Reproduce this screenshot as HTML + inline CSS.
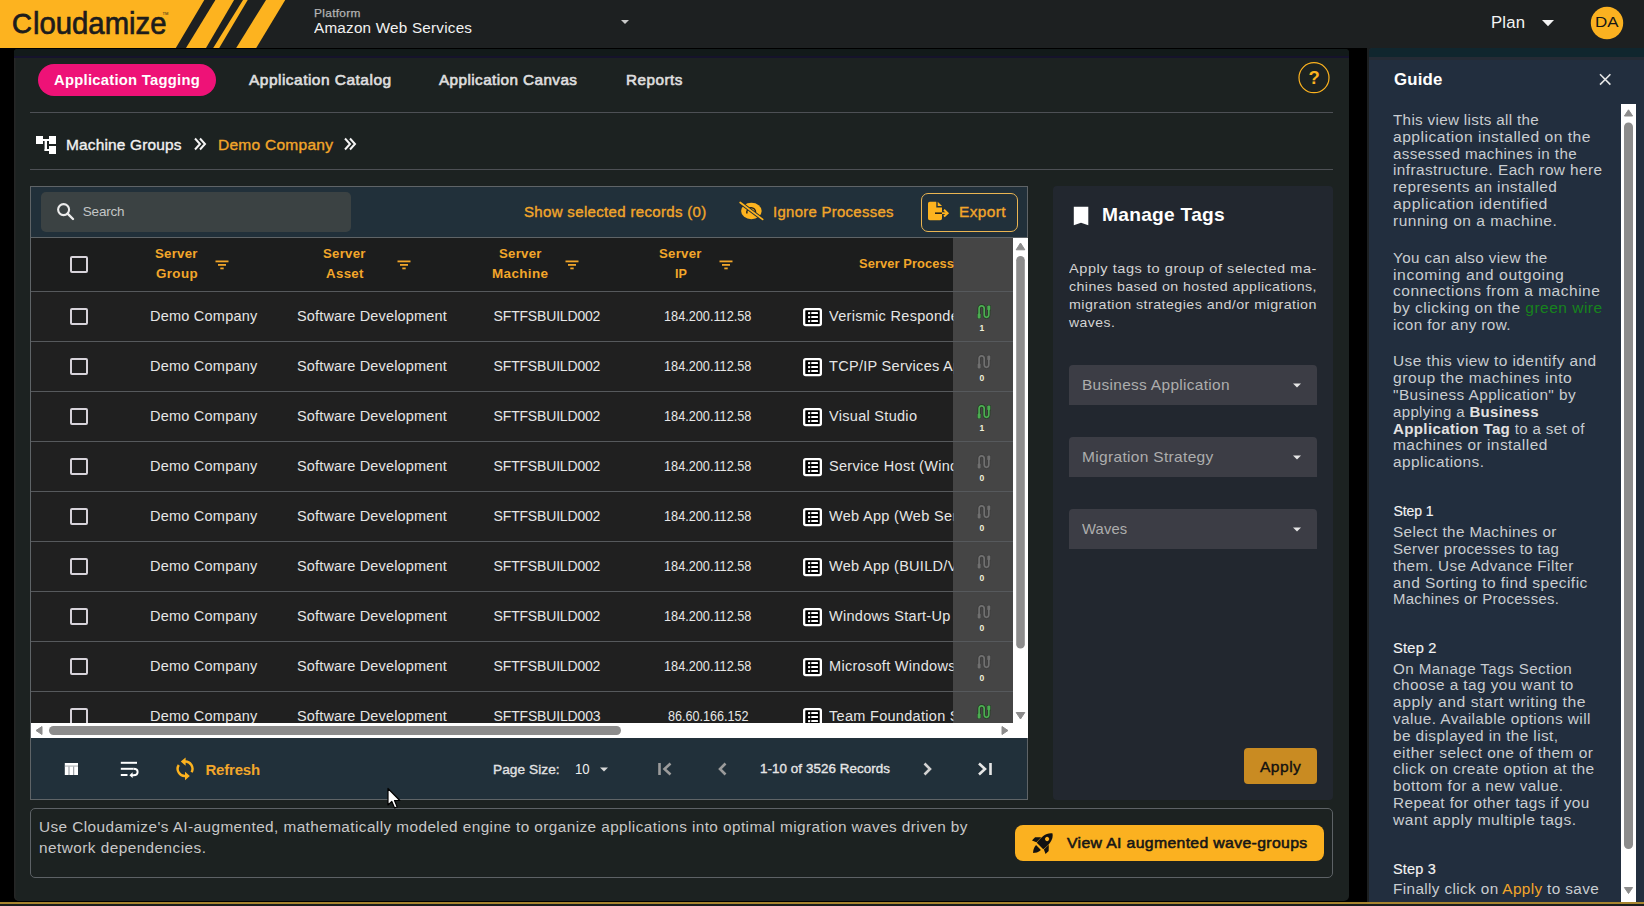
<!DOCTYPE html><html><head><meta charset="utf-8"><title>Cloudamize - Application Tagging</title><style>html,body{margin:0;padding:0;}body{width:1644px;height:906px;overflow:hidden;position:relative;font-family:"Liberation Sans", sans-serif;-webkit-font-smoothing:antialiased;}b{font-weight:700}</style></head><body>
<div style="position:absolute;left:0px;top:0px;width:1644px;height:906px;background:#1b1f1f"></div>
<div style="position:absolute;left:0px;top:48px;width:1367px;height:854px;background:#000"></div>
<div style="position:absolute;left:0px;top:0px;width:1644px;height:48px;background:#1d2021"></div>
<svg style="position:absolute;left:0px;top:0px;" width="300" height="48" viewBox="0 0 300 48"><polygon fill="#fdb31f" points="0,0 204.3,0 175.8,48 0,48"/><polygon fill="#fdb31f" points="215.4,0 234.1,0 206,48 186,48"/><polygon fill="#fdb31f" points="243,0 247.7,0 219.2,48 213.2,48"/><polygon fill="#fdb31f" points="266,0 285.2,0 256.2,48 236.2,48"/></svg>
<svg style="position:absolute;left:620px;top:19px;" width="10" height="6" viewBox="0 0 10 6"><polygon fill="#c9c9c9" points="1,1 9,1 5,5"/></svg>
<svg style="position:absolute;left:1541px;top:19px;" width="14" height="8" viewBox="0 0 14 8"><polygon fill="#f4f4f4" points="1,1 13,1 7,7.3"/></svg>
<svg style="position:absolute;left:1590px;top:6px;" width="34" height="34" viewBox="0 0 34 34"><circle cx="17" cy="17" r="16.2" fill="#fbb120"/></svg>
<div style="position:absolute;left:14px;top:49px;width:1335px;height:852px;background:#1c2221;border-radius:4px 4px 5px 5px;box-shadow:inset 1.5px 0 0 #252626"></div>
<div style="position:absolute;left:14px;top:49px;width:1335px;height:7px;background:#121a1a;border-radius:4px 4px 0 0"></div>
<div style="position:absolute;left:14px;top:56px;width:1335px;height:2px;background:#15132c"></div>
<div style="position:absolute;left:38px;top:64px;width:178px;height:32px;background:#ee1277;border-radius:16px"></div>
<svg style="position:absolute;left:1297px;top:61px;" width="34" height="34" viewBox="0 0 34 34"><circle cx="17" cy="16.7" r="15" fill="none" stroke="#fdb31f" stroke-width="1.2"/></svg>
<div style="position:absolute;left:30px;top:112px;width:1303px;height:1px;background:#4d5055"></div>
<svg style="position:absolute;left:30px;top:130px;" width="30" height="30" viewBox="0 0 30 30"><g fill="#fff"><rect x="6" y="6" width="7" height="8"/><rect x="19" y="6" width="7" height="8"/><rect x="19" y="16" width="7" height="8"/><rect x="13" y="9" width="6" height="2"/><rect x="14.6" y="9" width="2.4" height="12"/><rect x="14.6" y="19" width="4.4" height="2"/></g></svg>
<svg style="position:absolute;left:190px;top:136px;" width="20" height="16" viewBox="0 0 20 16"><path d="M5,2.5 L10,8 L5,13.5 M10,2.5 L15,8 L10,13.5" fill="none" stroke="#f4f4f4" stroke-width="2"/></svg>
<svg style="position:absolute;left:340px;top:136px;" width="20" height="16" viewBox="0 0 20 16"><path d="M5,2.5 L10,8 L5,13.5 M10,2.5 L15,8 L10,13.5" fill="none" stroke="#f4f4f4" stroke-width="2"/></svg>
<div style="position:absolute;left:30px;top:169px;width:1303px;height:1px;background:#4d5055"></div>
<div style="position:absolute;left:30px;top:186px;width:998px;height:614px;background:#202020;box-sizing:border-box;border:1px solid #5f6467"></div>
<div style="position:absolute;left:31px;top:187px;width:996px;height:50px;background:#21303a"></div>
<div style="position:absolute;left:41px;top:192px;width:310px;height:40px;background:#3b4243;border-radius:5px"></div>
<svg style="position:absolute;left:52px;top:199px;" width="24" height="24" viewBox="0 0 24 24"><circle cx="11.6" cy="10.6" r="5.5" fill="none" stroke="#ececec" stroke-width="2.1"/><line x1="15.6" y1="14.6" x2="21" y2="20" stroke="#ececec" stroke-width="2.4" stroke-linecap="round"/></svg>
<svg style="position:absolute;left:735px;top:196px;" width="30" height="30" viewBox="0 0 30 30"><ellipse cx="16.4" cy="15" rx="10.3" ry="8.2" fill="#fdb31f"/><path d="M12.1,17.6 A4.4,4.4 0 1 1 20.6,16.6" fill="none" stroke="#2a2418" stroke-width="1.4"/><line x1="5.2" y1="6.5" x2="27.6" y2="23.4" stroke="#21303a" stroke-width="3.6"/><line x1="5.2" y1="6.5" x2="27.6" y2="23.4" stroke="#fdb31f" stroke-width="1.8" stroke-linecap="round"/></svg>
<div style="position:absolute;left:921px;top:192.5px;width:97px;height:39px;box-sizing:border-box;border:1.5px solid #eab552;border-radius:7px"></div>
<svg style="position:absolute;left:925px;top:199px;" width="26" height="24" viewBox="0 0 26 24"><path d="M3,4.5 Q3,2.7 4.8,2.7 L11.3,2.7 L11.3,8.5 L17,8.5 L17,19.5 Q17,21.3 15.2,21.3 L4.8,21.3 Q3,21.3 3,19.5 Z" fill="#fdb31f"/><path d="M12.7,2.7 L17,7 L12.7,7 Z" fill="#fdb31f"/><line x1="10" y1="14.2" x2="17" y2="14.2" stroke="#2a2418" stroke-width="1.6"/><line x1="17" y1="14.2" x2="22" y2="14.2" stroke="#fdb31f" stroke-width="1.8"/><path d="M19,10.8 L22.6,14.2 L19,17.6" fill="none" stroke="#fdb31f" stroke-width="2"/></svg>
<div style="position:absolute;left:31px;top:237px;width:996px;height:1px;background:#5f6467"></div>
<div style="position:absolute;left:31px;top:238px;width:922px;height:53px;background:#1c1d1d"></div>
<div style="position:absolute;left:953px;top:238px;width:60px;height:485px;background:#454545"></div>
<div style="position:absolute;left:70px;top:256px;width:18px;height:17px;box-sizing:border-box;border:2px solid #d7d3da;border-radius:2px"></div>
<svg style="position:absolute;left:215px;top:259.5px;" width="14" height="10" viewBox="0 0 14 10"><g fill="#f2a62a"><rect x="0.5" y="0.5" width="13" height="1.8"/><rect x="3" y="4" width="8" height="1.8"/><rect x="5.3" y="7.5" width="3.4" height="1.8"/></g></svg>
<svg style="position:absolute;left:397px;top:259.5px;" width="14" height="10" viewBox="0 0 14 10"><g fill="#f2a62a"><rect x="0.5" y="0.5" width="13" height="1.8"/><rect x="3" y="4" width="8" height="1.8"/><rect x="5.3" y="7.5" width="3.4" height="1.8"/></g></svg>
<svg style="position:absolute;left:565px;top:259.5px;" width="14" height="10" viewBox="0 0 14 10"><g fill="#f2a62a"><rect x="0.5" y="0.5" width="13" height="1.8"/><rect x="3" y="4" width="8" height="1.8"/><rect x="5.3" y="7.5" width="3.4" height="1.8"/></g></svg>
<svg style="position:absolute;left:719px;top:259.5px;" width="14" height="10" viewBox="0 0 14 10"><g fill="#f2a62a"><rect x="0.5" y="0.5" width="13" height="1.8"/><rect x="3" y="4" width="8" height="1.8"/><rect x="5.3" y="7.5" width="3.4" height="1.8"/></g></svg>
<div style="position:absolute;left:31px;top:290.5px;width:982px;height:1px;background:#56595c"></div>
<div style="position:absolute;left:70px;top:308px;width:18px;height:17px;box-sizing:border-box;border:2px solid #d7d3da;border-radius:2px"></div>
<svg style="position:absolute;left:803px;top:307.5px;" width="20" height="20" viewBox="0 0 20 20"><rect x="1.15" y="1.15" width="16.7" height="16" rx="1.6" fill="#000" stroke="#fff" stroke-width="2.3"/><g fill="#fff"><rect x="5" y="4" width="2.2" height="2.2" rx="0.6"/><rect x="5" y="8" width="2.2" height="2.2" rx="0.6"/><rect x="5" y="12" width="2.2" height="2.2" rx="0.6"/><rect x="8.2" y="4.1" width="6.8" height="2" rx="0.6"/><rect x="8.2" y="8.1" width="6.8" height="2" rx="0.6"/><rect x="8.2" y="12.1" width="6.8" height="2" rx="0.6"/></g></svg>
<svg style="position:absolute;left:975.5px;top:303.5px;" width="16" height="16" viewBox="0 0 16 16"><path d="M3.1,12.5 L3.1,4.6 Q3.1,1.9 5.6,1.9 Q8.2,1.9 8.2,4.6 L8.2,10.6 Q8.2,13.3 10.5,13.3 Q12.8,13.3 12.8,10.6 L12.8,3" fill="none" stroke="#233a22" stroke-width="3.1"/><rect x="1.1" y="9" width="4" height="5.8" rx="1.3" fill="#233a22"/><rect x="10.8" y="1" width="4" height="5.8" rx="1.3" fill="#233a22"/><path d="M3.1,12.5 L3.1,4.6 Q3.1,1.9 5.6,1.9 Q8.2,1.9 8.2,4.6 L8.2,10.6 Q8.2,13.3 10.5,13.3 Q12.8,13.3 12.8,10.6 L12.8,3" fill="none" stroke="#4cad52" stroke-width="1.7"/><rect x="1.6" y="9.6" width="3" height="4.8" rx="1" fill="#4cad52"/><rect x="11.3" y="1.5" width="3" height="4.8" rx="1" fill="#4cad52"/></svg>
<div style="position:absolute;left:31px;top:341px;width:982px;height:1px;background:#56595c"></div>
<div style="position:absolute;left:70px;top:358px;width:18px;height:17px;box-sizing:border-box;border:2px solid #d7d3da;border-radius:2px"></div>
<svg style="position:absolute;left:803px;top:357.5px;" width="20" height="20" viewBox="0 0 20 20"><rect x="1.15" y="1.15" width="16.7" height="16" rx="1.6" fill="#000" stroke="#fff" stroke-width="2.3"/><g fill="#fff"><rect x="5" y="4" width="2.2" height="2.2" rx="0.6"/><rect x="5" y="8" width="2.2" height="2.2" rx="0.6"/><rect x="5" y="12" width="2.2" height="2.2" rx="0.6"/><rect x="8.2" y="4.1" width="6.8" height="2" rx="0.6"/><rect x="8.2" y="8.1" width="6.8" height="2" rx="0.6"/><rect x="8.2" y="12.1" width="6.8" height="2" rx="0.6"/></g></svg>
<svg style="position:absolute;left:975.5px;top:353.5px;" width="16" height="16" viewBox="0 0 16 16"><path d="M3.1,12.5 L3.1,4.6 Q3.1,1.9 5.6,1.9 Q8.2,1.9 8.2,4.6 L8.2,10.6 Q8.2,13.3 10.5,13.3 Q12.8,13.3 12.8,10.6 L12.8,3" fill="none" stroke="#3c3c3c" stroke-width="3.1"/><rect x="1.1" y="9" width="4" height="5.8" rx="1.3" fill="#3c3c3c"/><rect x="10.8" y="1" width="4" height="5.8" rx="1.3" fill="#3c3c3c"/><path d="M3.1,12.5 L3.1,4.6 Q3.1,1.9 5.6,1.9 Q8.2,1.9 8.2,4.6 L8.2,10.6 Q8.2,13.3 10.5,13.3 Q12.8,13.3 12.8,10.6 L12.8,3" fill="none" stroke="#707070" stroke-width="1.7"/><rect x="1.6" y="9.6" width="3" height="4.8" rx="1" fill="#707070"/><rect x="11.3" y="1.5" width="3" height="4.8" rx="1" fill="#707070"/></svg>
<div style="position:absolute;left:31px;top:391px;width:982px;height:1px;background:#56595c"></div>
<div style="position:absolute;left:70px;top:408px;width:18px;height:17px;box-sizing:border-box;border:2px solid #d7d3da;border-radius:2px"></div>
<svg style="position:absolute;left:803px;top:407.5px;" width="20" height="20" viewBox="0 0 20 20"><rect x="1.15" y="1.15" width="16.7" height="16" rx="1.6" fill="#000" stroke="#fff" stroke-width="2.3"/><g fill="#fff"><rect x="5" y="4" width="2.2" height="2.2" rx="0.6"/><rect x="5" y="8" width="2.2" height="2.2" rx="0.6"/><rect x="5" y="12" width="2.2" height="2.2" rx="0.6"/><rect x="8.2" y="4.1" width="6.8" height="2" rx="0.6"/><rect x="8.2" y="8.1" width="6.8" height="2" rx="0.6"/><rect x="8.2" y="12.1" width="6.8" height="2" rx="0.6"/></g></svg>
<svg style="position:absolute;left:975.5px;top:403.5px;" width="16" height="16" viewBox="0 0 16 16"><path d="M3.1,12.5 L3.1,4.6 Q3.1,1.9 5.6,1.9 Q8.2,1.9 8.2,4.6 L8.2,10.6 Q8.2,13.3 10.5,13.3 Q12.8,13.3 12.8,10.6 L12.8,3" fill="none" stroke="#233a22" stroke-width="3.1"/><rect x="1.1" y="9" width="4" height="5.8" rx="1.3" fill="#233a22"/><rect x="10.8" y="1" width="4" height="5.8" rx="1.3" fill="#233a22"/><path d="M3.1,12.5 L3.1,4.6 Q3.1,1.9 5.6,1.9 Q8.2,1.9 8.2,4.6 L8.2,10.6 Q8.2,13.3 10.5,13.3 Q12.8,13.3 12.8,10.6 L12.8,3" fill="none" stroke="#4cad52" stroke-width="1.7"/><rect x="1.6" y="9.6" width="3" height="4.8" rx="1" fill="#4cad52"/><rect x="11.3" y="1.5" width="3" height="4.8" rx="1" fill="#4cad52"/></svg>
<div style="position:absolute;left:31px;top:441px;width:982px;height:1px;background:#56595c"></div>
<div style="position:absolute;left:70px;top:458px;width:18px;height:17px;box-sizing:border-box;border:2px solid #d7d3da;border-radius:2px"></div>
<svg style="position:absolute;left:803px;top:457.5px;" width="20" height="20" viewBox="0 0 20 20"><rect x="1.15" y="1.15" width="16.7" height="16" rx="1.6" fill="#000" stroke="#fff" stroke-width="2.3"/><g fill="#fff"><rect x="5" y="4" width="2.2" height="2.2" rx="0.6"/><rect x="5" y="8" width="2.2" height="2.2" rx="0.6"/><rect x="5" y="12" width="2.2" height="2.2" rx="0.6"/><rect x="8.2" y="4.1" width="6.8" height="2" rx="0.6"/><rect x="8.2" y="8.1" width="6.8" height="2" rx="0.6"/><rect x="8.2" y="12.1" width="6.8" height="2" rx="0.6"/></g></svg>
<svg style="position:absolute;left:975.5px;top:453.5px;" width="16" height="16" viewBox="0 0 16 16"><path d="M3.1,12.5 L3.1,4.6 Q3.1,1.9 5.6,1.9 Q8.2,1.9 8.2,4.6 L8.2,10.6 Q8.2,13.3 10.5,13.3 Q12.8,13.3 12.8,10.6 L12.8,3" fill="none" stroke="#3c3c3c" stroke-width="3.1"/><rect x="1.1" y="9" width="4" height="5.8" rx="1.3" fill="#3c3c3c"/><rect x="10.8" y="1" width="4" height="5.8" rx="1.3" fill="#3c3c3c"/><path d="M3.1,12.5 L3.1,4.6 Q3.1,1.9 5.6,1.9 Q8.2,1.9 8.2,4.6 L8.2,10.6 Q8.2,13.3 10.5,13.3 Q12.8,13.3 12.8,10.6 L12.8,3" fill="none" stroke="#707070" stroke-width="1.7"/><rect x="1.6" y="9.6" width="3" height="4.8" rx="1" fill="#707070"/><rect x="11.3" y="1.5" width="3" height="4.8" rx="1" fill="#707070"/></svg>
<div style="position:absolute;left:31px;top:491px;width:982px;height:1px;background:#56595c"></div>
<div style="position:absolute;left:70px;top:508px;width:18px;height:17px;box-sizing:border-box;border:2px solid #d7d3da;border-radius:2px"></div>
<svg style="position:absolute;left:803px;top:507.5px;" width="20" height="20" viewBox="0 0 20 20"><rect x="1.15" y="1.15" width="16.7" height="16" rx="1.6" fill="#000" stroke="#fff" stroke-width="2.3"/><g fill="#fff"><rect x="5" y="4" width="2.2" height="2.2" rx="0.6"/><rect x="5" y="8" width="2.2" height="2.2" rx="0.6"/><rect x="5" y="12" width="2.2" height="2.2" rx="0.6"/><rect x="8.2" y="4.1" width="6.8" height="2" rx="0.6"/><rect x="8.2" y="8.1" width="6.8" height="2" rx="0.6"/><rect x="8.2" y="12.1" width="6.8" height="2" rx="0.6"/></g></svg>
<svg style="position:absolute;left:975.5px;top:503.5px;" width="16" height="16" viewBox="0 0 16 16"><path d="M3.1,12.5 L3.1,4.6 Q3.1,1.9 5.6,1.9 Q8.2,1.9 8.2,4.6 L8.2,10.6 Q8.2,13.3 10.5,13.3 Q12.8,13.3 12.8,10.6 L12.8,3" fill="none" stroke="#3c3c3c" stroke-width="3.1"/><rect x="1.1" y="9" width="4" height="5.8" rx="1.3" fill="#3c3c3c"/><rect x="10.8" y="1" width="4" height="5.8" rx="1.3" fill="#3c3c3c"/><path d="M3.1,12.5 L3.1,4.6 Q3.1,1.9 5.6,1.9 Q8.2,1.9 8.2,4.6 L8.2,10.6 Q8.2,13.3 10.5,13.3 Q12.8,13.3 12.8,10.6 L12.8,3" fill="none" stroke="#707070" stroke-width="1.7"/><rect x="1.6" y="9.6" width="3" height="4.8" rx="1" fill="#707070"/><rect x="11.3" y="1.5" width="3" height="4.8" rx="1" fill="#707070"/></svg>
<div style="position:absolute;left:31px;top:541px;width:982px;height:1px;background:#56595c"></div>
<div style="position:absolute;left:70px;top:558px;width:18px;height:17px;box-sizing:border-box;border:2px solid #d7d3da;border-radius:2px"></div>
<svg style="position:absolute;left:803px;top:557.5px;" width="20" height="20" viewBox="0 0 20 20"><rect x="1.15" y="1.15" width="16.7" height="16" rx="1.6" fill="#000" stroke="#fff" stroke-width="2.3"/><g fill="#fff"><rect x="5" y="4" width="2.2" height="2.2" rx="0.6"/><rect x="5" y="8" width="2.2" height="2.2" rx="0.6"/><rect x="5" y="12" width="2.2" height="2.2" rx="0.6"/><rect x="8.2" y="4.1" width="6.8" height="2" rx="0.6"/><rect x="8.2" y="8.1" width="6.8" height="2" rx="0.6"/><rect x="8.2" y="12.1" width="6.8" height="2" rx="0.6"/></g></svg>
<svg style="position:absolute;left:975.5px;top:553.5px;" width="16" height="16" viewBox="0 0 16 16"><path d="M3.1,12.5 L3.1,4.6 Q3.1,1.9 5.6,1.9 Q8.2,1.9 8.2,4.6 L8.2,10.6 Q8.2,13.3 10.5,13.3 Q12.8,13.3 12.8,10.6 L12.8,3" fill="none" stroke="#3c3c3c" stroke-width="3.1"/><rect x="1.1" y="9" width="4" height="5.8" rx="1.3" fill="#3c3c3c"/><rect x="10.8" y="1" width="4" height="5.8" rx="1.3" fill="#3c3c3c"/><path d="M3.1,12.5 L3.1,4.6 Q3.1,1.9 5.6,1.9 Q8.2,1.9 8.2,4.6 L8.2,10.6 Q8.2,13.3 10.5,13.3 Q12.8,13.3 12.8,10.6 L12.8,3" fill="none" stroke="#707070" stroke-width="1.7"/><rect x="1.6" y="9.6" width="3" height="4.8" rx="1" fill="#707070"/><rect x="11.3" y="1.5" width="3" height="4.8" rx="1" fill="#707070"/></svg>
<div style="position:absolute;left:31px;top:591px;width:982px;height:1px;background:#56595c"></div>
<div style="position:absolute;left:70px;top:608px;width:18px;height:17px;box-sizing:border-box;border:2px solid #d7d3da;border-radius:2px"></div>
<svg style="position:absolute;left:803px;top:607.5px;" width="20" height="20" viewBox="0 0 20 20"><rect x="1.15" y="1.15" width="16.7" height="16" rx="1.6" fill="#000" stroke="#fff" stroke-width="2.3"/><g fill="#fff"><rect x="5" y="4" width="2.2" height="2.2" rx="0.6"/><rect x="5" y="8" width="2.2" height="2.2" rx="0.6"/><rect x="5" y="12" width="2.2" height="2.2" rx="0.6"/><rect x="8.2" y="4.1" width="6.8" height="2" rx="0.6"/><rect x="8.2" y="8.1" width="6.8" height="2" rx="0.6"/><rect x="8.2" y="12.1" width="6.8" height="2" rx="0.6"/></g></svg>
<svg style="position:absolute;left:975.5px;top:603.5px;" width="16" height="16" viewBox="0 0 16 16"><path d="M3.1,12.5 L3.1,4.6 Q3.1,1.9 5.6,1.9 Q8.2,1.9 8.2,4.6 L8.2,10.6 Q8.2,13.3 10.5,13.3 Q12.8,13.3 12.8,10.6 L12.8,3" fill="none" stroke="#3c3c3c" stroke-width="3.1"/><rect x="1.1" y="9" width="4" height="5.8" rx="1.3" fill="#3c3c3c"/><rect x="10.8" y="1" width="4" height="5.8" rx="1.3" fill="#3c3c3c"/><path d="M3.1,12.5 L3.1,4.6 Q3.1,1.9 5.6,1.9 Q8.2,1.9 8.2,4.6 L8.2,10.6 Q8.2,13.3 10.5,13.3 Q12.8,13.3 12.8,10.6 L12.8,3" fill="none" stroke="#707070" stroke-width="1.7"/><rect x="1.6" y="9.6" width="3" height="4.8" rx="1" fill="#707070"/><rect x="11.3" y="1.5" width="3" height="4.8" rx="1" fill="#707070"/></svg>
<div style="position:absolute;left:31px;top:641px;width:982px;height:1px;background:#56595c"></div>
<div style="position:absolute;left:70px;top:658px;width:18px;height:17px;box-sizing:border-box;border:2px solid #d7d3da;border-radius:2px"></div>
<svg style="position:absolute;left:803px;top:657.5px;" width="20" height="20" viewBox="0 0 20 20"><rect x="1.15" y="1.15" width="16.7" height="16" rx="1.6" fill="#000" stroke="#fff" stroke-width="2.3"/><g fill="#fff"><rect x="5" y="4" width="2.2" height="2.2" rx="0.6"/><rect x="5" y="8" width="2.2" height="2.2" rx="0.6"/><rect x="5" y="12" width="2.2" height="2.2" rx="0.6"/><rect x="8.2" y="4.1" width="6.8" height="2" rx="0.6"/><rect x="8.2" y="8.1" width="6.8" height="2" rx="0.6"/><rect x="8.2" y="12.1" width="6.8" height="2" rx="0.6"/></g></svg>
<svg style="position:absolute;left:975.5px;top:653.5px;" width="16" height="16" viewBox="0 0 16 16"><path d="M3.1,12.5 L3.1,4.6 Q3.1,1.9 5.6,1.9 Q8.2,1.9 8.2,4.6 L8.2,10.6 Q8.2,13.3 10.5,13.3 Q12.8,13.3 12.8,10.6 L12.8,3" fill="none" stroke="#3c3c3c" stroke-width="3.1"/><rect x="1.1" y="9" width="4" height="5.8" rx="1.3" fill="#3c3c3c"/><rect x="10.8" y="1" width="4" height="5.8" rx="1.3" fill="#3c3c3c"/><path d="M3.1,12.5 L3.1,4.6 Q3.1,1.9 5.6,1.9 Q8.2,1.9 8.2,4.6 L8.2,10.6 Q8.2,13.3 10.5,13.3 Q12.8,13.3 12.8,10.6 L12.8,3" fill="none" stroke="#707070" stroke-width="1.7"/><rect x="1.6" y="9.6" width="3" height="4.8" rx="1" fill="#707070"/><rect x="11.3" y="1.5" width="3" height="4.8" rx="1" fill="#707070"/></svg>
<div style="position:absolute;left:31px;top:691px;width:982px;height:1px;background:#56595c"></div>
<div style="position:absolute;left:70px;top:708px;width:18px;height:17px;box-sizing:border-box;border:2px solid #d7d3da;border-radius:2px"></div>
<svg style="position:absolute;left:803px;top:707.5px;" width="20" height="20" viewBox="0 0 20 20"><rect x="1.15" y="1.15" width="16.7" height="16" rx="1.6" fill="#000" stroke="#fff" stroke-width="2.3"/><g fill="#fff"><rect x="5" y="4" width="2.2" height="2.2" rx="0.6"/><rect x="5" y="8" width="2.2" height="2.2" rx="0.6"/><rect x="5" y="12" width="2.2" height="2.2" rx="0.6"/><rect x="8.2" y="4.1" width="6.8" height="2" rx="0.6"/><rect x="8.2" y="8.1" width="6.8" height="2" rx="0.6"/><rect x="8.2" y="12.1" width="6.8" height="2" rx="0.6"/></g></svg>
<svg style="position:absolute;left:975.5px;top:703.5px;" width="16" height="16" viewBox="0 0 16 16"><path d="M3.1,12.5 L3.1,4.6 Q3.1,1.9 5.6,1.9 Q8.2,1.9 8.2,4.6 L8.2,10.6 Q8.2,13.3 10.5,13.3 Q12.8,13.3 12.8,10.6 L12.8,3" fill="none" stroke="#233a22" stroke-width="3.1"/><rect x="1.1" y="9" width="4" height="5.8" rx="1.3" fill="#233a22"/><rect x="10.8" y="1" width="4" height="5.8" rx="1.3" fill="#233a22"/><path d="M3.1,12.5 L3.1,4.6 Q3.1,1.9 5.6,1.9 Q8.2,1.9 8.2,4.6 L8.2,10.6 Q8.2,13.3 10.5,13.3 Q12.8,13.3 12.8,10.6 L12.8,3" fill="none" stroke="#4cad52" stroke-width="1.7"/><rect x="1.6" y="9.6" width="3" height="4.8" rx="1" fill="#4cad52"/><rect x="11.3" y="1.5" width="3" height="4.8" rx="1" fill="#4cad52"/></svg>
<div style="position:absolute;left:31px;top:738px;width:996px;height:61px;background:#21303a"></div>
<svg style="position:absolute;left:62px;top:760px;" width="20" height="18" viewBox="0 0 20 18"><rect x="2.8" y="3" width="13.2" height="12" fill="#fff"/><rect x="2.8" y="5.6" width="13.2" height="0.9" fill="#9aa0a4"/><rect x="6.5" y="6.5" width="1" height="8.5" fill="#8a9096"/><rect x="11.2" y="6.5" width="1" height="8.5" fill="#8a9096"/></svg>
<svg style="position:absolute;left:118px;top:758px;" width="24" height="22" viewBox="0 0 24 22"><g stroke="#fff" stroke-width="2" fill="none"><line x1="2.8" y1="4.8" x2="19" y2="4.8"/><line x1="2.8" y1="10.8" x2="15.5" y2="10.8"/><line x1="2.8" y1="17" x2="9.5" y2="17"/><path d="M15.5,10.8 Q19.6,10.8 19.6,14 Q19.6,17.2 15.5,17.2 L13.2,17.2"/></g><polygon fill="#fff" points="11.4,17.2 14.6,14.3 14.6,20.1"/></svg>
<svg style="position:absolute;left:170px;top:754px;" width="30" height="30" viewBox="0 0 30 30"><g fill="none" stroke="#fdb31f" stroke-width="2.4"><path d="M14.5,7.6 A7.2,7.2 0 0 1 21.6,18.2"/><path d="M8.8,11 A7.2,7.2 0 0 0 15.8,22"/></g><polygon fill="#fdb31f" points="10.8,7.6 15.6,3.4 15.6,11.8"/><polygon fill="#fdb31f" points="19.8,22 15,17.8 15,26.2"/></svg>
<svg style="position:absolute;left:597px;top:766px;" width="14" height="8" viewBox="0 0 14 8"><polygon fill="#d9d9d9" points="3,1.5 11,1.5 7,5.6"/></svg>
<svg style="position:absolute;left:654px;top:760px;" width="22" height="18" viewBox="0 0 22 18"><g stroke="#9b9b9b" fill="none" stroke-width="2.6"><line x1="5.5" y1="3" x2="5.5" y2="15"/><path d="M16.5,3.5 L10.5,9 L16.5,14.5"/></g></svg>
<svg style="position:absolute;left:714px;top:760px;" width="18" height="18" viewBox="0 0 18 18"><path d="M11.5,3.5 L6,9 L11.5,14.5" stroke="#9b9b9b" fill="none" stroke-width="2.6"/></svg>
<svg style="position:absolute;left:918px;top:760px;" width="18" height="18" viewBox="0 0 18 18"><path d="M6.5,3.5 L12,9 L6.5,14.5" stroke="#d2d2d2" fill="none" stroke-width="2.6"/></svg>
<svg style="position:absolute;left:974px;top:760px;" width="22" height="18" viewBox="0 0 22 18"><g stroke="#e6e6e6" fill="none" stroke-width="2.6"><path d="M5,3.5 L11,9 L5,14.5"/><line x1="16.5" y1="3" x2="16.5" y2="15"/></g></svg>
<div style="position:absolute;left:1053px;top:186px;width:280px;height:614px;background:#22272f;border-radius:4px"></div>
<svg style="position:absolute;left:1070px;top:203px;" width="22" height="26" viewBox="0 0 22 26"><path d="M3.8,3.7 L18.3,3.7 L18.3,22.3 L11,19.7 L3.8,22.3 Z" fill="#fff"/></svg>
<div style="position:absolute;left:1069px;top:365px;width:248px;height:40px;background:#3c3d45;border-radius:4px 4px 0 0"></div>
<svg style="position:absolute;left:1290px;top:381.8px;" width="14" height="8" viewBox="0 0 14 8"><polygon fill="#e6e6e6" points="3,1.5 11,1.5 7,5.5"/></svg>
<div style="position:absolute;left:1069px;top:437px;width:248px;height:40px;background:#3c3d45;border-radius:4px 4px 0 0"></div>
<svg style="position:absolute;left:1290px;top:453.8px;" width="14" height="8" viewBox="0 0 14 8"><polygon fill="#e6e6e6" points="3,1.5 11,1.5 7,5.5"/></svg>
<div style="position:absolute;left:1069px;top:509px;width:248px;height:40px;background:#3c3d45;border-radius:4px 4px 0 0"></div>
<svg style="position:absolute;left:1290px;top:525.8px;" width="14" height="8" viewBox="0 0 14 8"><polygon fill="#e6e6e6" points="3,1.5 11,1.5 7,5.5"/></svg>
<div style="position:absolute;left:1244px;top:748px;width:73px;height:36px;background:#c98b22;border-radius:4px"></div>
<div style="position:absolute;left:30px;top:808px;width:1303px;height:69.5px;box-sizing:border-box;border:1px solid #5d6266;border-radius:5px"></div>
<div style="position:absolute;left:1015px;top:825.2px;width:309px;height:35.4px;background:#fbb120;border-radius:8px"></div>
<svg style="position:absolute;left:1027px;top:827px;" width="32" height="32" viewBox="0 0 32 32"><g transform="rotate(45 16 16)"><path d="M16,2.5 C21,6 21.6,13 20.6,20.2 L11.4,20.2 C10.4,13 11,6 16,2.5 Z" fill="#111"/><circle cx="16" cy="10.2" r="2.1" fill="#fbb120"/><path d="M10.6,13.2 L6.4,17.6 L6.4,22 L10.8,20 Z" fill="#111"/><path d="M21.4,13.2 L25.6,17.6 L25.6,22 L21.2,20 Z" fill="#111"/><path d="M12.6,22.4 L19.4,22.4 C19.4,25.8 17.6,28.4 16,30 C14.4,28.4 12.6,25.8 12.6,22.4 Z" fill="#111"/></g></svg>
<div style="position:absolute;left:1367px;top:48px;width:277px;height:854px;background:#1c1f20"></div>
<div style="position:absolute;left:1369px;top:48px;width:275px;height:854px;background:#222e3e;border-radius:4px 0 0 0"></div>
<div style="position:absolute;left:1369px;top:48px;width:275px;height:9px;background:#10262e;border-radius:4px 0 0 0"></div>
<div style="position:absolute;left:1369px;top:57px;width:275px;height:3px;background:#252b35"></div>
<svg style="position:absolute;left:1597px;top:72px;" width="16" height="15" viewBox="0 0 16 15"><g stroke="#e6e6e6" stroke-width="1.6"><line x1="3" y1="2.3" x2="13.4" y2="12.6"/><line x1="13.4" y1="2.3" x2="3" y2="12.6"/></g></svg>
<div style="position:absolute;left:1621px;top:103.5px;width:15px;height:798.5px;background:#fff"></div>
<svg style="position:absolute;left:1621px;top:103.5px;" width="15" height="798.5" viewBox="0 0 15 798.5"><polygon fill="#8c8c8c" points="7.5,5.8 11.6,12 3.4,12" stroke="#8c8c8c" stroke-width="1" stroke-linejoin="round"/><rect x="3" y="18.5" width="9" height="726.5" rx="4.5" fill="#8c8c8c"/><polygon fill="#8c8c8c" points="3.4,783.5 11.6,783.5 7.5,789.5" stroke="#8c8c8c" stroke-width="1" stroke-linejoin="round"/></svg>
<div id="t0" style="position:absolute;left:12.00px;top:10.12px;font-size:27.5px;line-height:27.5px;color:#1c1c1c;font-weight:400;white-space:nowrap;-webkit-text-stroke:0.8px #1c1c1c;">C</div>
<div id="t1" style="position:absolute;left:32.50px;top:7.58px;font-size:30.5px;line-height:30.5px;color:#1c1c1c;font-weight:400;white-space:nowrap;-webkit-text-stroke:0.7px #1c1c1c;transform:scaleX(0.9602);transform-origin:0 0;">loudamize</div>
<div id="t2" style="position:absolute;left:162.50px;top:11.61px;font-size:4px;line-height:4px;color:#1c1c1c;font-weight:400;white-space:nowrap;">TM</div>
<div id="t3" style="position:absolute;left:314.00px;top:7.99px;font-size:11px;line-height:11px;color:#b3b3b3;font-weight:400;white-space:nowrap;letter-spacing:0.292px;-webkit-text-stroke-width:0.25px;transform:scaleX(1.0810);transform-origin:0 0;">Platform</div>
<div id="t4" style="position:absolute;left:314.00px;top:20.55px;font-size:14.7px;line-height:14.7px;color:#f2f2f2;font-weight:400;white-space:nowrap;letter-spacing:0.207px;transform:scaleX(1.0393);transform-origin:0 0;">Amazon Web Services</div>
<div id="t5" style="position:absolute;left:1491.30px;top:14.20px;font-size:16.3px;line-height:16.3px;color:#f4f4f4;font-weight:400;white-space:nowrap;letter-spacing:0.183px;transform:scaleX(1.0259);transform-origin:0 0;">Plan</div>
<div id="t6" style="position:absolute;left:1595.40px;top:14.87px;font-size:14.8px;line-height:14.8px;color:#161616;font-weight:400;white-space:nowrap;transform:scaleX(1.1429);transform-origin:0 0;">DA</div>
<div id="t7" style="position:absolute;left:54.00px;top:73.15px;font-size:14px;line-height:14px;color:#ffffff;font-weight:700;white-space:nowrap;letter-spacing:0.257px;transform:scaleX(1.0548);transform-origin:0 0;">Application Tagging</div>
<div id="t8" style="position:absolute;left:248.60px;top:73.15px;font-size:14px;line-height:14px;color:#dedede;font-weight:400;white-space:nowrap;letter-spacing:0.431px;-webkit-text-stroke-width:0.6px;transform:scaleX(1.1067);transform-origin:0 0;">Application Catalog</div>
<div id="t9" style="position:absolute;left:439.30px;top:73.15px;font-size:14px;line-height:14px;color:#dedede;font-weight:400;white-space:nowrap;letter-spacing:0.391px;-webkit-text-stroke-width:0.6px;transform:scaleX(1.0908);transform-origin:0 0;">Application Canvas</div>
<div id="t10" style="position:absolute;left:626.00px;top:73.15px;font-size:14px;line-height:14px;color:#dedede;font-weight:400;white-space:nowrap;letter-spacing:0.445px;-webkit-text-stroke-width:0.6px;transform:scaleX(1.0889);transform-origin:0 0;">Reports</div>
<div id="t11" style="position:absolute;left:1308.60px;top:69.34px;font-size:18.5px;line-height:18.5px;color:#fdb31f;font-weight:700;white-space:nowrap;">?</div>
<div id="t12" style="position:absolute;left:66.40px;top:137.30px;font-size:15px;line-height:15px;color:#f2f2f2;font-weight:400;white-space:nowrap;letter-spacing:0.165px;-webkit-text-stroke-width:0.35px;transform:scaleX(1.0302);transform-origin:0 0;">Machine Groups</div>
<div id="t13" style="position:absolute;left:217.70px;top:137.30px;font-size:15px;line-height:15px;color:#f2a62a;font-weight:400;white-space:nowrap;letter-spacing:0.232px;-webkit-text-stroke-width:0.35px;transform:scaleX(1.0366);transform-origin:0 0;">Demo Company</div>
<div id="t14" style="position:absolute;left:82.80px;top:205.07px;font-size:13.5px;line-height:13.5px;color:#c3c6c6;font-weight:400;white-space:nowrap;letter-spacing:-0.216px;">Search</div>
<div id="t15" style="position:absolute;left:524.00px;top:205.15px;font-size:14px;line-height:14px;color:#f2a62a;font-weight:400;white-space:nowrap;letter-spacing:0.305px;-webkit-text-stroke-width:0.35px;transform:scaleX(1.0725);transform-origin:0 0;">Show selected records (0)</div>
<div id="t16" style="position:absolute;left:772.70px;top:205.15px;font-size:14px;line-height:14px;color:#f2a62a;font-weight:400;white-space:nowrap;letter-spacing:0.290px;-webkit-text-stroke-width:0.35px;transform:scaleX(1.0636);transform-origin:0 0;">Ignore Processes</div>
<div id="t17" style="position:absolute;left:959.30px;top:204.92px;font-size:14.5px;line-height:14.5px;color:#f2a62a;font-weight:400;white-space:nowrap;letter-spacing:0.351px;-webkit-text-stroke-width:0.35px;transform:scaleX(1.0670);transform-origin:0 0;">Export</div>
<div id="t18" style="position:absolute;left:155.25px;top:248.43px;font-size:12.6px;line-height:12.6px;color:#f2a62a;font-weight:700;white-space:nowrap;letter-spacing:0.250px;transform:scaleX(1.0502);transform-origin:0 0;">Server</div>
<div id="t19" style="position:absolute;left:155.70px;top:268.43px;font-size:12.6px;line-height:12.6px;color:#f2a62a;font-weight:700;white-space:nowrap;letter-spacing:0.360px;transform:scaleX(1.0606);transform-origin:0 0;">Group</div>
<div id="t20" style="position:absolute;left:323.05px;top:248.43px;font-size:12.6px;line-height:12.6px;color:#f2a62a;font-weight:700;white-space:nowrap;letter-spacing:0.250px;transform:scaleX(1.0502);transform-origin:0 0;">Server</div>
<div id="t21" style="position:absolute;left:325.55px;top:268.43px;font-size:12.6px;line-height:12.6px;color:#f2a62a;font-weight:700;white-space:nowrap;letter-spacing:0.302px;transform:scaleX(1.0557);transform-origin:0 0;">Asset</div>
<div id="t22" style="position:absolute;left:498.75px;top:248.43px;font-size:12.6px;line-height:12.6px;color:#f2a62a;font-weight:700;white-space:nowrap;letter-spacing:0.250px;transform:scaleX(1.0502);transform-origin:0 0;">Server</div>
<div id="t23" style="position:absolute;left:492.00px;top:268.43px;font-size:12.6px;line-height:12.6px;color:#f2a62a;font-weight:700;white-space:nowrap;letter-spacing:0.351px;transform:scaleX(1.0668);transform-origin:0 0;">Machine</div>
<div id="t24" style="position:absolute;left:659.45px;top:248.43px;font-size:12.6px;line-height:12.6px;color:#f2a62a;font-weight:700;white-space:nowrap;letter-spacing:0.250px;transform:scaleX(1.0502);transform-origin:0 0;">Server</div>
<div id="t25" style="position:absolute;left:674.95px;top:268.43px;font-size:12.6px;line-height:12.6px;color:#f2a62a;font-weight:700;white-space:nowrap;">IP</div>
<div id="t26" style="position:absolute;left:859.00px;top:258.23px;font-size:12.6px;line-height:12.6px;color:#f2a62a;font-weight:700;white-space:nowrap;letter-spacing:0.098px;clip-path:inset(-5px calc(100% - 94.3px) -5px -5px);transform:scaleX(1.0214);transform-origin:0 0;">Server Process</div>
<div id="t27" style="position:absolute;left:150.40px;top:309.05px;font-size:14px;line-height:14px;color:#e6e6e6;font-weight:400;white-space:nowrap;letter-spacing:0.216px;transform:scaleX(1.0364);transform-origin:0 0;">Demo Company</div>
<div id="t28" style="position:absolute;left:296.80px;top:309.05px;font-size:14px;line-height:14px;color:#e6e6e6;font-weight:400;white-space:nowrap;letter-spacing:0.166px;transform:scaleX(1.0346);transform-origin:0 0;">Software Development</div>
<div id="t29" style="position:absolute;left:493.60px;top:309.05px;font-size:14px;line-height:14px;color:#e6e6e6;font-weight:400;white-space:nowrap;letter-spacing:-0.178px;">SFTFSBUILD002</div>
<div id="t30" style="position:absolute;left:664.20px;top:309.05px;font-size:14px;line-height:14px;color:#e6e6e6;font-weight:400;white-space:nowrap;transform:scaleX(0.9078);transform-origin:0 0;">184.200.112.58</div>
<div id="t31" style="position:absolute;left:829.00px;top:309.05px;font-size:14px;line-height:14px;color:#e6e6e6;font-weight:400;white-space:nowrap;letter-spacing:0.282px;width:119.62184063283813px;overflow:hidden;height:18.2px;transform:scaleX(1.0366);transform-origin:0 0;">Verismic Responder</div>
<div id="t32" style="position:absolute;left:979.60px;top:324.40px;font-size:8.5px;line-height:8.5px;color:#f2f0d8;font-weight:700;white-space:nowrap;">1</div>
<div id="t33" style="position:absolute;left:150.40px;top:359.05px;font-size:14px;line-height:14px;color:#e6e6e6;font-weight:400;white-space:nowrap;letter-spacing:0.216px;transform:scaleX(1.0364);transform-origin:0 0;">Demo Company</div>
<div id="t34" style="position:absolute;left:296.80px;top:359.05px;font-size:14px;line-height:14px;color:#e6e6e6;font-weight:400;white-space:nowrap;letter-spacing:0.166px;transform:scaleX(1.0346);transform-origin:0 0;">Software Development</div>
<div id="t35" style="position:absolute;left:493.60px;top:359.05px;font-size:14px;line-height:14px;color:#e6e6e6;font-weight:400;white-space:nowrap;letter-spacing:-0.178px;">SFTFSBUILD002</div>
<div id="t36" style="position:absolute;left:664.20px;top:359.05px;font-size:14px;line-height:14px;color:#e6e6e6;font-weight:400;white-space:nowrap;transform:scaleX(0.9078);transform-origin:0 0;">184.200.112.58</div>
<div id="t37" style="position:absolute;left:829.00px;top:359.05px;font-size:14px;line-height:14px;color:#e6e6e6;font-weight:400;white-space:nowrap;letter-spacing:0.282px;width:119.62184063283813px;overflow:hidden;height:18.2px;transform:scaleX(1.0366);transform-origin:0 0;">TCP/IP Services Application</div>
<div id="t38" style="position:absolute;left:979.60px;top:374.40px;font-size:8.5px;line-height:8.5px;color:#f2f0d8;font-weight:700;white-space:nowrap;">0</div>
<div id="t39" style="position:absolute;left:150.40px;top:409.05px;font-size:14px;line-height:14px;color:#e6e6e6;font-weight:400;white-space:nowrap;letter-spacing:0.216px;transform:scaleX(1.0364);transform-origin:0 0;">Demo Company</div>
<div id="t40" style="position:absolute;left:296.80px;top:409.05px;font-size:14px;line-height:14px;color:#e6e6e6;font-weight:400;white-space:nowrap;letter-spacing:0.166px;transform:scaleX(1.0346);transform-origin:0 0;">Software Development</div>
<div id="t41" style="position:absolute;left:493.60px;top:409.05px;font-size:14px;line-height:14px;color:#e6e6e6;font-weight:400;white-space:nowrap;letter-spacing:-0.178px;">SFTFSBUILD002</div>
<div id="t42" style="position:absolute;left:664.20px;top:409.05px;font-size:14px;line-height:14px;color:#e6e6e6;font-weight:400;white-space:nowrap;transform:scaleX(0.9078);transform-origin:0 0;">184.200.112.58</div>
<div id="t43" style="position:absolute;left:829.00px;top:409.05px;font-size:14px;line-height:14px;color:#e6e6e6;font-weight:400;white-space:nowrap;letter-spacing:0.282px;width:119.62184063283813px;overflow:hidden;height:18.2px;transform:scaleX(1.0366);transform-origin:0 0;">Visual Studio</div>
<div id="t44" style="position:absolute;left:979.60px;top:424.40px;font-size:8.5px;line-height:8.5px;color:#f2f0d8;font-weight:700;white-space:nowrap;">1</div>
<div id="t45" style="position:absolute;left:150.40px;top:459.05px;font-size:14px;line-height:14px;color:#e6e6e6;font-weight:400;white-space:nowrap;letter-spacing:0.216px;transform:scaleX(1.0364);transform-origin:0 0;">Demo Company</div>
<div id="t46" style="position:absolute;left:296.80px;top:459.05px;font-size:14px;line-height:14px;color:#e6e6e6;font-weight:400;white-space:nowrap;letter-spacing:0.166px;transform:scaleX(1.0346);transform-origin:0 0;">Software Development</div>
<div id="t47" style="position:absolute;left:493.60px;top:459.05px;font-size:14px;line-height:14px;color:#e6e6e6;font-weight:400;white-space:nowrap;letter-spacing:-0.178px;">SFTFSBUILD002</div>
<div id="t48" style="position:absolute;left:664.20px;top:459.05px;font-size:14px;line-height:14px;color:#e6e6e6;font-weight:400;white-space:nowrap;transform:scaleX(0.9078);transform-origin:0 0;">184.200.112.58</div>
<div id="t49" style="position:absolute;left:829.00px;top:459.05px;font-size:14px;line-height:14px;color:#e6e6e6;font-weight:400;white-space:nowrap;letter-spacing:0.282px;width:119.62184063283813px;overflow:hidden;height:18.2px;transform:scaleX(1.0366);transform-origin:0 0;">Service Host (Windows)</div>
<div id="t50" style="position:absolute;left:979.60px;top:474.40px;font-size:8.5px;line-height:8.5px;color:#f2f0d8;font-weight:700;white-space:nowrap;">0</div>
<div id="t51" style="position:absolute;left:150.40px;top:509.05px;font-size:14px;line-height:14px;color:#e6e6e6;font-weight:400;white-space:nowrap;letter-spacing:0.216px;transform:scaleX(1.0364);transform-origin:0 0;">Demo Company</div>
<div id="t52" style="position:absolute;left:296.80px;top:509.05px;font-size:14px;line-height:14px;color:#e6e6e6;font-weight:400;white-space:nowrap;letter-spacing:0.166px;transform:scaleX(1.0346);transform-origin:0 0;">Software Development</div>
<div id="t53" style="position:absolute;left:493.60px;top:509.05px;font-size:14px;line-height:14px;color:#e6e6e6;font-weight:400;white-space:nowrap;letter-spacing:-0.178px;">SFTFSBUILD002</div>
<div id="t54" style="position:absolute;left:664.20px;top:509.05px;font-size:14px;line-height:14px;color:#e6e6e6;font-weight:400;white-space:nowrap;transform:scaleX(0.9078);transform-origin:0 0;">184.200.112.58</div>
<div id="t55" style="position:absolute;left:829.00px;top:509.05px;font-size:14px;line-height:14px;color:#e6e6e6;font-weight:400;white-space:nowrap;letter-spacing:0.282px;width:119.62184063283813px;overflow:hidden;height:18.2px;transform:scaleX(1.0366);transform-origin:0 0;">Web App (Web Server)</div>
<div id="t56" style="position:absolute;left:979.60px;top:524.40px;font-size:8.5px;line-height:8.5px;color:#f2f0d8;font-weight:700;white-space:nowrap;">0</div>
<div id="t57" style="position:absolute;left:150.40px;top:559.05px;font-size:14px;line-height:14px;color:#e6e6e6;font-weight:400;white-space:nowrap;letter-spacing:0.216px;transform:scaleX(1.0364);transform-origin:0 0;">Demo Company</div>
<div id="t58" style="position:absolute;left:296.80px;top:559.05px;font-size:14px;line-height:14px;color:#e6e6e6;font-weight:400;white-space:nowrap;letter-spacing:0.166px;transform:scaleX(1.0346);transform-origin:0 0;">Software Development</div>
<div id="t59" style="position:absolute;left:493.60px;top:559.05px;font-size:14px;line-height:14px;color:#e6e6e6;font-weight:400;white-space:nowrap;letter-spacing:-0.178px;">SFTFSBUILD002</div>
<div id="t60" style="position:absolute;left:664.20px;top:559.05px;font-size:14px;line-height:14px;color:#e6e6e6;font-weight:400;white-space:nowrap;transform:scaleX(0.9078);transform-origin:0 0;">184.200.112.58</div>
<div id="t61" style="position:absolute;left:829.00px;top:559.05px;font-size:14px;line-height:14px;color:#e6e6e6;font-weight:400;white-space:nowrap;letter-spacing:0.282px;width:119.62184063283813px;overflow:hidden;height:18.2px;transform:scaleX(1.0366);transform-origin:0 0;">Web App (BUILD/V</div>
<div id="t62" style="position:absolute;left:979.60px;top:574.40px;font-size:8.5px;line-height:8.5px;color:#f2f0d8;font-weight:700;white-space:nowrap;">0</div>
<div id="t63" style="position:absolute;left:150.40px;top:609.05px;font-size:14px;line-height:14px;color:#e6e6e6;font-weight:400;white-space:nowrap;letter-spacing:0.216px;transform:scaleX(1.0364);transform-origin:0 0;">Demo Company</div>
<div id="t64" style="position:absolute;left:296.80px;top:609.05px;font-size:14px;line-height:14px;color:#e6e6e6;font-weight:400;white-space:nowrap;letter-spacing:0.166px;transform:scaleX(1.0346);transform-origin:0 0;">Software Development</div>
<div id="t65" style="position:absolute;left:493.60px;top:609.05px;font-size:14px;line-height:14px;color:#e6e6e6;font-weight:400;white-space:nowrap;letter-spacing:-0.178px;">SFTFSBUILD002</div>
<div id="t66" style="position:absolute;left:664.20px;top:609.05px;font-size:14px;line-height:14px;color:#e6e6e6;font-weight:400;white-space:nowrap;transform:scaleX(0.9078);transform-origin:0 0;">184.200.112.58</div>
<div id="t67" style="position:absolute;left:829.00px;top:609.05px;font-size:14px;line-height:14px;color:#e6e6e6;font-weight:400;white-space:nowrap;letter-spacing:0.282px;width:119.62184063283813px;overflow:hidden;height:18.2px;transform:scaleX(1.0366);transform-origin:0 0;">Windows Start-Up Application</div>
<div id="t68" style="position:absolute;left:979.60px;top:624.40px;font-size:8.5px;line-height:8.5px;color:#f2f0d8;font-weight:700;white-space:nowrap;">0</div>
<div id="t69" style="position:absolute;left:150.40px;top:659.05px;font-size:14px;line-height:14px;color:#e6e6e6;font-weight:400;white-space:nowrap;letter-spacing:0.216px;transform:scaleX(1.0364);transform-origin:0 0;">Demo Company</div>
<div id="t70" style="position:absolute;left:296.80px;top:659.05px;font-size:14px;line-height:14px;color:#e6e6e6;font-weight:400;white-space:nowrap;letter-spacing:0.166px;transform:scaleX(1.0346);transform-origin:0 0;">Software Development</div>
<div id="t71" style="position:absolute;left:493.60px;top:659.05px;font-size:14px;line-height:14px;color:#e6e6e6;font-weight:400;white-space:nowrap;letter-spacing:-0.178px;">SFTFSBUILD002</div>
<div id="t72" style="position:absolute;left:664.20px;top:659.05px;font-size:14px;line-height:14px;color:#e6e6e6;font-weight:400;white-space:nowrap;transform:scaleX(0.9078);transform-origin:0 0;">184.200.112.58</div>
<div id="t73" style="position:absolute;left:829.00px;top:659.05px;font-size:14px;line-height:14px;color:#e6e6e6;font-weight:400;white-space:nowrap;letter-spacing:0.282px;width:119.62184063283813px;overflow:hidden;height:18.2px;transform:scaleX(1.0366);transform-origin:0 0;">Microsoft Windows</div>
<div id="t74" style="position:absolute;left:979.60px;top:674.40px;font-size:8.5px;line-height:8.5px;color:#f2f0d8;font-weight:700;white-space:nowrap;">0</div>
<div id="t75" style="position:absolute;left:150.40px;top:709.05px;font-size:14px;line-height:14px;color:#e6e6e6;font-weight:400;white-space:nowrap;letter-spacing:0.216px;transform:scaleX(1.0364);transform-origin:0 0;">Demo Company</div>
<div id="t76" style="position:absolute;left:296.80px;top:709.05px;font-size:14px;line-height:14px;color:#e6e6e6;font-weight:400;white-space:nowrap;letter-spacing:0.166px;transform:scaleX(1.0346);transform-origin:0 0;">Software Development</div>
<div id="t77" style="position:absolute;left:493.60px;top:709.05px;font-size:14px;line-height:14px;color:#e6e6e6;font-weight:400;white-space:nowrap;letter-spacing:-0.161px;">SFTFSBUILD003</div>
<div id="t78" style="position:absolute;left:667.70px;top:709.05px;font-size:14px;line-height:14px;color:#e6e6e6;font-weight:400;white-space:nowrap;transform:scaleX(0.9002);transform-origin:0 0;">86.60.166.152</div>
<div id="t79" style="position:absolute;left:829.00px;top:709.05px;font-size:14px;line-height:14px;color:#e6e6e6;font-weight:400;white-space:nowrap;letter-spacing:0.282px;width:119.62184063283813px;overflow:hidden;height:18.2px;transform:scaleX(1.0366);transform-origin:0 0;">Team Foundation Server</div>
<div id="t80" style="position:absolute;left:979.60px;top:724.40px;font-size:8.5px;line-height:8.5px;color:#f2f0d8;font-weight:700;white-space:nowrap;">1</div>
<div id="t81" style="position:absolute;left:205.40px;top:761.70px;font-size:15px;line-height:15px;color:#f2a62a;font-weight:700;white-space:nowrap;letter-spacing:-0.193px;">Refresh</div>
<div id="t82" style="position:absolute;left:492.50px;top:762.87px;font-size:13.5px;line-height:13.5px;color:#e2e2e2;font-weight:400;white-space:nowrap;letter-spacing:0.057px;-webkit-text-stroke-width:0.35px;transform:scaleX(1.0120);transform-origin:0 0;">Page Size:</div>
<div id="t83" style="position:absolute;left:575.00px;top:761.48px;font-size:15.5px;line-height:15.5px;color:#efefef;font-weight:400;white-space:nowrap;transform:scaleX(0.8464);transform-origin:0 0;">10</div>
<div id="t84" style="position:absolute;left:759.60px;top:762.12px;font-size:13.2px;line-height:13.2px;color:#e6e6e6;font-weight:400;white-space:nowrap;letter-spacing:0.064px;-webkit-text-stroke-width:0.35px;transform:scaleX(1.0145);transform-origin:0 0;">1-10 of 3526 Records</div>
<div id="t85" style="position:absolute;left:1101.50px;top:205.94px;font-size:18.5px;line-height:18.5px;color:#ffffff;font-weight:700;white-space:nowrap;letter-spacing:0.265px;transform:scaleX(1.0356);transform-origin:0 0;">Manage Tags</div>
<div id="t86" style="position:absolute;left:1069.20px;top:263.16px;font-size:12.8px;line-height:12.8px;color:#d4d4d4;font-weight:400;white-space:nowrap;letter-spacing:0.477px;transform:scaleX(1.1374);transform-origin:0 0;">Apply tags to group of selected ma-</div>
<div id="t87" style="position:absolute;left:1069.20px;top:281.16px;font-size:12.8px;line-height:12.8px;color:#d4d4d4;font-weight:400;white-space:nowrap;letter-spacing:0.387px;transform:scaleX(1.1073);transform-origin:0 0;">chines based on hosted applications,</div>
<div id="t88" style="position:absolute;left:1069.20px;top:299.16px;font-size:12.8px;line-height:12.8px;color:#d4d4d4;font-weight:400;white-space:nowrap;letter-spacing:0.396px;transform:scaleX(1.1147);transform-origin:0 0;">migration strategies and/or migration</div>
<div id="t89" style="position:absolute;left:1069.20px;top:317.16px;font-size:12.8px;line-height:12.8px;color:#d4d4d4;font-weight:400;white-space:nowrap;letter-spacing:0.438px;transform:scaleX(1.0900);transform-origin:0 0;">waves.</div>
<div id="t90" style="position:absolute;left:1081.70px;top:378.02px;font-size:14.5px;line-height:14.5px;color:#adadad;font-weight:400;white-space:nowrap;letter-spacing:0.287px;transform:scaleX(1.0654);transform-origin:0 0;">Business Application</div>
<div id="t91" style="position:absolute;left:1081.70px;top:450.02px;font-size:14.5px;line-height:14.5px;color:#adadad;font-weight:400;white-space:nowrap;letter-spacing:0.300px;transform:scaleX(1.0695);transform-origin:0 0;">Migration Strategy</div>
<div id="t92" style="position:absolute;left:1081.70px;top:522.02px;font-size:14.5px;line-height:14.5px;color:#adadad;font-weight:400;white-space:nowrap;letter-spacing:0.139px;transform:scaleX(1.0194);transform-origin:0 0;">Waves</div>
<div id="t93" style="position:absolute;left:1260.40px;top:760.02px;font-size:14.5px;line-height:14.5px;color:#111111;font-weight:400;white-space:nowrap;letter-spacing:0.429px;-webkit-text-stroke-width:0.35px;transform:scaleX(1.0764);transform-origin:0 0;">Apply</div>
<div id="t94" style="position:absolute;left:39.00px;top:820.05px;font-size:14px;line-height:14px;color:#c8c8c8;font-weight:400;white-space:nowrap;letter-spacing:0.380px;transform:scaleX(1.0961);transform-origin:0 0;">Use Cloudamize&#x27;s AI-augmented, mathematically modeled engine to organize applications into optimal migration waves driven by</div>
<div id="t95" style="position:absolute;left:39.00px;top:840.85px;font-size:14px;line-height:14px;color:#c8c8c8;font-weight:400;white-space:nowrap;letter-spacing:0.420px;transform:scaleX(1.0958);transform-origin:0 0;">network dependencies.</div>
<div id="t96" style="position:absolute;left:1067.20px;top:836.07px;font-size:14.8px;line-height:14.8px;color:#161616;font-weight:400;white-space:nowrap;letter-spacing:0.323px;-webkit-text-stroke-width:0.55px;transform:scaleX(1.0670);transform-origin:0 0;">View AI augmented wave-groups</div>
<div id="t97" style="position:absolute;left:1393.50px;top:71.13px;font-size:16.5px;line-height:16.5px;color:#ffffff;font-weight:700;white-space:nowrap;letter-spacing:0.150px;transform:scaleX(1.0197);transform-origin:0 0;">Guide</div>
<div id="t98" style="position:absolute;left:1393.40px;top:113.05px;font-size:14px;line-height:14px;color:#c9cdd1;font-weight:400;white-space:nowrap;letter-spacing:0.303px;transform:scaleX(1.0851);transform-origin:0 0;">This view lists all the</div>
<div id="t99" style="position:absolute;left:1393.40px;top:129.85px;font-size:14px;line-height:14px;color:#c9cdd1;font-weight:400;white-space:nowrap;letter-spacing:0.429px;transform:scaleX(1.1178);transform-origin:0 0;">application installed on the</div>
<div id="t100" style="position:absolute;left:1393.40px;top:146.65px;font-size:14px;line-height:14px;color:#c9cdd1;font-weight:400;white-space:nowrap;letter-spacing:0.363px;transform:scaleX(1.0842);transform-origin:0 0;">assessed machines in the</div>
<div id="t101" style="position:absolute;left:1393.40px;top:163.45px;font-size:14px;line-height:14px;color:#c9cdd1;font-weight:400;white-space:nowrap;letter-spacing:0.382px;transform:scaleX(1.0980);transform-origin:0 0;">infrastructure. Each row here</div>
<div id="t102" style="position:absolute;left:1393.40px;top:180.25px;font-size:14px;line-height:14px;color:#c9cdd1;font-weight:400;white-space:nowrap;letter-spacing:0.380px;transform:scaleX(1.0976);transform-origin:0 0;">represents an installed</div>
<div id="t103" style="position:absolute;left:1393.40px;top:197.05px;font-size:14px;line-height:14px;color:#c9cdd1;font-weight:400;white-space:nowrap;letter-spacing:0.462px;transform:scaleX(1.1297);transform-origin:0 0;">application identified</div>
<div id="t104" style="position:absolute;left:1393.40px;top:213.85px;font-size:14px;line-height:14px;color:#c9cdd1;font-weight:400;white-space:nowrap;letter-spacing:0.455px;transform:scaleX(1.1094);transform-origin:0 0;">running on a machine.</div>
<div id="t105" style="position:absolute;left:1393.40px;top:250.75px;font-size:14px;line-height:14px;color:#c9cdd1;font-weight:400;white-space:nowrap;letter-spacing:0.357px;transform:scaleX(1.0862);transform-origin:0 0;">You can also view the</div>
<div id="t106" style="position:absolute;left:1393.40px;top:267.55px;font-size:14px;line-height:14px;color:#c9cdd1;font-weight:400;white-space:nowrap;letter-spacing:0.532px;transform:scaleX(1.1278);transform-origin:0 0;">incoming and outgoing</div>
<div id="t107" style="position:absolute;left:1393.40px;top:284.35px;font-size:14px;line-height:14px;color:#c9cdd1;font-weight:400;white-space:nowrap;letter-spacing:0.459px;transform:scaleX(1.1090);transform-origin:0 0;">connections from a machine</div>
<div id="t108" style="position:absolute;left:1393.40px;top:301.15px;font-size:14px;line-height:14px;color:#c9cdd1;font-weight:400;white-space:nowrap;letter-spacing:0.417px;transform:scaleX(1.1101);transform-origin:0 0;">by clicking on the <span style="color:#17831d">green wire</span></div>
<div id="t109" style="position:absolute;left:1393.40px;top:317.95px;font-size:14px;line-height:14px;color:#c9cdd1;font-weight:400;white-space:nowrap;letter-spacing:0.356px;transform:scaleX(1.0916);transform-origin:0 0;">icon for any row.</div>
<div id="t110" style="position:absolute;left:1393.40px;top:354.35px;font-size:14px;line-height:14px;color:#c9cdd1;font-weight:400;white-space:nowrap;letter-spacing:0.383px;transform:scaleX(1.1022);transform-origin:0 0;">Use this view to identify and</div>
<div id="t111" style="position:absolute;left:1393.40px;top:371.15px;font-size:14px;line-height:14px;color:#c9cdd1;font-weight:400;white-space:nowrap;letter-spacing:0.478px;transform:scaleX(1.1179);transform-origin:0 0;">group the machines into</div>
<div id="t112" style="position:absolute;left:1393.40px;top:387.95px;font-size:14px;line-height:14px;color:#c9cdd1;font-weight:400;white-space:nowrap;letter-spacing:0.388px;transform:scaleX(1.0977);transform-origin:0 0;">&quot;Business Application&quot; by</div>
<div id="t113" style="position:absolute;left:1393.40px;top:404.75px;font-size:14px;line-height:14px;color:#c9cdd1;font-weight:400;white-space:nowrap;letter-spacing:0.322px;transform:scaleX(1.0717);transform-origin:0 0;">applying a <b style="color:#e2e2e2">Business</b></div>
<div id="t114" style="position:absolute;left:1393.40px;top:421.55px;font-size:14px;line-height:14px;color:#c9cdd1;font-weight:400;white-space:nowrap;letter-spacing:0.315px;transform:scaleX(1.0781);transform-origin:0 0;"><b style="color:#e2e2e2">Application Tag</b> to a set of</div>
<div id="t115" style="position:absolute;left:1393.40px;top:438.35px;font-size:14px;line-height:14px;color:#c9cdd1;font-weight:400;white-space:nowrap;letter-spacing:0.413px;transform:scaleX(1.1039);transform-origin:0 0;">machines or installed</div>
<div id="t116" style="position:absolute;left:1393.40px;top:455.15px;font-size:14px;line-height:14px;color:#c9cdd1;font-weight:400;white-space:nowrap;letter-spacing:0.399px;transform:scaleX(1.1015);transform-origin:0 0;">applications.</div>
<div id="t117" style="position:absolute;left:1393.40px;top:504.15px;font-size:14px;line-height:14px;color:#f4f4f4;font-weight:400;white-space:nowrap;letter-spacing:-0.057px;-webkit-text-stroke-width:0.15px;">Step 1</div>
<div id="t118" style="position:absolute;left:1393.40px;top:525.15px;font-size:14px;line-height:14px;color:#c9cdd1;font-weight:400;white-space:nowrap;letter-spacing:0.367px;transform:scaleX(1.0885);transform-origin:0 0;">Select the Machines or</div>
<div id="t119" style="position:absolute;left:1393.40px;top:541.95px;font-size:14px;line-height:14px;color:#c9cdd1;font-weight:400;white-space:nowrap;letter-spacing:0.307px;transform:scaleX(1.0736);transform-origin:0 0;">Server processes to tag</div>
<div id="t120" style="position:absolute;left:1393.40px;top:558.75px;font-size:14px;line-height:14px;color:#c9cdd1;font-weight:400;white-space:nowrap;letter-spacing:0.382px;transform:scaleX(1.0920);transform-origin:0 0;">them. Use Advance Filter</div>
<div id="t121" style="position:absolute;left:1393.40px;top:575.55px;font-size:14px;line-height:14px;color:#c9cdd1;font-weight:400;white-space:nowrap;letter-spacing:0.402px;transform:scaleX(1.1099);transform-origin:0 0;">and Sorting to find specific</div>
<div id="t122" style="position:absolute;left:1393.40px;top:592.35px;font-size:14px;line-height:14px;color:#c9cdd1;font-weight:400;white-space:nowrap;letter-spacing:0.296px;transform:scaleX(1.0666);transform-origin:0 0;">Machines or Processes.</div>
<div id="t123" style="position:absolute;left:1393.40px;top:641.05px;font-size:14px;line-height:14px;color:#f4f4f4;font-weight:400;white-space:nowrap;letter-spacing:0.231px;-webkit-text-stroke-width:0.15px;transform:scaleX(1.0447);transform-origin:0 0;">Step 2</div>
<div id="t124" style="position:absolute;left:1393.40px;top:661.55px;font-size:14px;line-height:14px;color:#c9cdd1;font-weight:400;white-space:nowrap;letter-spacing:0.384px;transform:scaleX(1.0835);transform-origin:0 0;">On Manage Tags Section</div>
<div id="t125" style="position:absolute;left:1393.40px;top:678.35px;font-size:14px;line-height:14px;color:#c9cdd1;font-weight:400;white-space:nowrap;letter-spacing:0.393px;transform:scaleX(1.0953);transform-origin:0 0;">choose a tag you want to</div>
<div id="t126" style="position:absolute;left:1393.40px;top:695.15px;font-size:14px;line-height:14px;color:#c9cdd1;font-weight:400;white-space:nowrap;letter-spacing:0.450px;transform:scaleX(1.1236);transform-origin:0 0;">apply and start writing the</div>
<div id="t127" style="position:absolute;left:1393.40px;top:711.95px;font-size:14px;line-height:14px;color:#c9cdd1;font-weight:400;white-space:nowrap;letter-spacing:0.364px;transform:scaleX(1.0991);transform-origin:0 0;">value. Available options will</div>
<div id="t128" style="position:absolute;left:1393.40px;top:728.75px;font-size:14px;line-height:14px;color:#c9cdd1;font-weight:400;white-space:nowrap;letter-spacing:0.354px;transform:scaleX(1.0990);transform-origin:0 0;">be displayed in the list,</div>
<div id="t129" style="position:absolute;left:1393.40px;top:745.55px;font-size:14px;line-height:14px;color:#c9cdd1;font-weight:400;white-space:nowrap;letter-spacing:0.405px;transform:scaleX(1.1070);transform-origin:0 0;">either select one of them or</div>
<div id="t130" style="position:absolute;left:1393.40px;top:762.35px;font-size:14px;line-height:14px;color:#c9cdd1;font-weight:400;white-space:nowrap;letter-spacing:0.397px;transform:scaleX(1.1083);transform-origin:0 0;">click on create option at the</div>
<div id="t131" style="position:absolute;left:1393.40px;top:779.15px;font-size:14px;line-height:14px;color:#c9cdd1;font-weight:400;white-space:nowrap;letter-spacing:0.404px;transform:scaleX(1.1009);transform-origin:0 0;">bottom for a new value.</div>
<div id="t132" style="position:absolute;left:1393.40px;top:795.95px;font-size:14px;line-height:14px;color:#c9cdd1;font-weight:400;white-space:nowrap;letter-spacing:0.369px;transform:scaleX(1.0971);transform-origin:0 0;">Repeat for other tags if you</div>
<div id="t133" style="position:absolute;left:1393.40px;top:812.75px;font-size:14px;line-height:14px;color:#c9cdd1;font-weight:400;white-space:nowrap;letter-spacing:0.446px;transform:scaleX(1.1170);transform-origin:0 0;">want apply multiple tags.</div>
<div id="t134" style="position:absolute;left:1393.40px;top:861.55px;font-size:14px;line-height:14px;color:#f4f4f4;font-weight:400;white-space:nowrap;letter-spacing:0.172px;-webkit-text-stroke-width:0.15px;transform:scaleX(1.0328);transform-origin:0 0;">Step 3</div>
<div id="t135" style="position:absolute;left:1393.40px;top:881.95px;font-size:14px;line-height:14px;color:#c9cdd1;font-weight:400;white-space:nowrap;letter-spacing:0.347px;transform:scaleX(1.0925);transform-origin:0 0;">Finally click on <span style="color:#f2a62a">Apply</span> to save</div>
<div style="position:absolute;left:1013px;top:238px;width:15px;height:485px;background:#fff"></div>
<svg style="position:absolute;left:1013px;top:238px;" width="15" height="485" viewBox="0 0 15 485"><polygon fill="#8c8c8c" points="7.5,5 11.8,11.8 3.2,11.8" stroke="#8c8c8c" stroke-width="1" stroke-linejoin="round"/><rect x="3.2" y="18" width="8.6" height="392.5" rx="4.3" fill="#8c8c8c"/><polygon fill="#8c8c8c" points="3.2,474.5 11.8,474.5 7.5,481" stroke="#8c8c8c" stroke-width="1" stroke-linejoin="round"/></svg>
<div style="position:absolute;left:31px;top:723px;width:997px;height:15px;background:#fff"></div>
<svg style="position:absolute;left:31px;top:723px;" width="997" height="15" viewBox="0 0 997 15"><polygon fill="#8c8c8c" points="5,7.5 11,3.5 11,11.5" stroke="#8c8c8c" stroke-width="1" stroke-linejoin="round"/><rect x="18" y="3" width="572" height="9" rx="4.5" fill="#8c8c8c"/><polygon fill="#8c8c8c" points="971,3.5 977,7.5 971,11.5" stroke="#8c8c8c" stroke-width="1" stroke-linejoin="round"/></svg>
<div style="position:absolute;left:0px;top:902px;width:1644px;height:2px;background:#a8852f"></div>
<div style="position:absolute;left:0px;top:904px;width:1644px;height:2px;background:#1a1d1e"></div>
<svg style="position:absolute;left:386.3px;top:787px;" width="16" height="24" viewBox="0 0 16 24"><path d="M2,1.5 L2,18 L5.8,14.4 L8.6,21 L11.2,19.9 L8.5,13.5 L13.8,13.5 Z" fill="#fff" stroke="#000" stroke-width="1.2" stroke-linejoin="round"/></svg>
</body></html>
